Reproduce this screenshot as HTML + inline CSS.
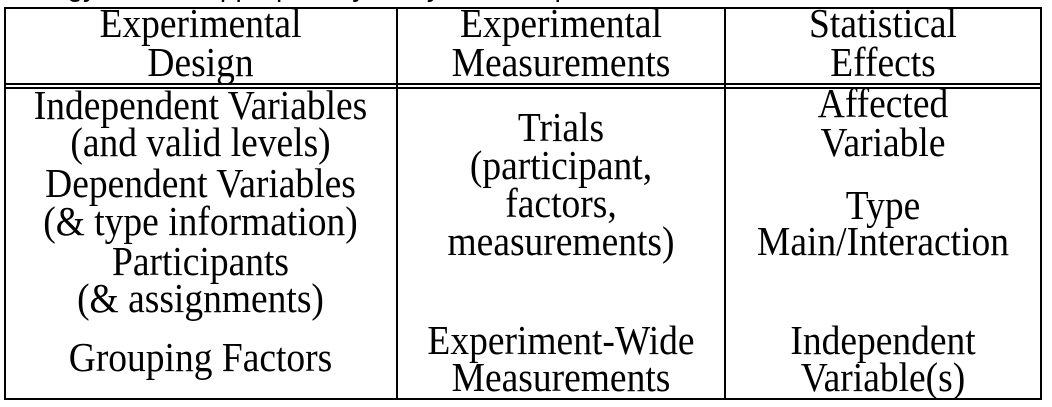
<!DOCTYPE html>
<html><head><meta charset="utf-8"><style>
html,body{margin:0;padding:0;background:#fff;width:1052px;height:407px;overflow:hidden;position:relative}
.l{position:absolute;background:#000}
.t{position:absolute;font-family:"Liberation Serif",serif;font-size:37.5px;line-height:38px;color:#000;text-align:center;white-space:nowrap;transform:translateY(2px) scaleY(1.1)}
.c1{left:4px;width:393px}.c2{left:397px;width:328px}.c3{left:725px;width:316px}
.top{position:absolute;top:-29px;left:30px;font-family:"Liberation Sans",sans-serif;font-size:28px;color:#000;white-space:nowrap}
</style></head><body>
<div class="top">ology used to appropriately analyze the experiment</div>
<div class="l" style="left:4px;top:7px;width:1038px;height:2px"></div>
<div class="l" style="left:4px;top:83px;width:1038px;height:2px"></div>
<div class="l" style="left:4px;top:87px;width:1038px;height:2px"></div>
<div class="l" style="left:4px;top:398px;width:1038px;height:2px"></div>
<div class="l" style="left:4px;top:7px;width:2px;height:393px"></div>
<div class="l" style="left:396px;top:7px;width:2px;height:393px"></div>
<div class="l" style="left:724px;top:7px;width:2px;height:393px"></div>
<div class="l" style="left:1040px;top:7px;width:2px;height:393px"></div>

<div class="t c1" style="top:4px">Experimental</div>
<div class="t c1" style="top:43px">Design</div>
<div class="t c2" style="top:4px">Experimental</div>
<div class="t c2" style="top:43px">Measurements</div>
<div class="t c3" style="top:4px">Statistical</div>
<div class="t c3" style="top:43px">Effects</div>

<div class="t c1" style="top:86px">Independent Variables</div>
<div class="t c1" style="top:123px">(and valid levels)</div>
<div class="t c1" style="top:164px">Dependent Variables</div>
<div class="t c1" style="top:202px">(&amp; type information)</div>
<div class="t c1" style="top:242px">Participants</div>
<div class="t c1" style="top:279px">(&amp; assignments)</div>
<div class="t c1" style="top:338px">Grouping Factors</div>

<div class="t c2" style="top:108px">Trials</div>
<div class="t c2" style="top:146px">(participant,</div>
<div class="t c2" style="top:184px">factors,</div>
<div class="t c2" style="top:222px">measurements)</div>
<div class="t c2" style="top:321px">Experiment-Wide</div>
<div class="t c2" style="top:358px">Measurements</div>

<div class="t c3" style="top:84px">Affected</div>
<div class="t c3" style="top:123px">Variable</div>
<div class="t c3" style="top:186px">Type</div>
<div class="t c3" style="top:222px">Main/Interaction</div>
<div class="t c3" style="top:321px">Independent</div>
<div class="t c3" style="top:358px">Variable(s)</div>
</body></html>
